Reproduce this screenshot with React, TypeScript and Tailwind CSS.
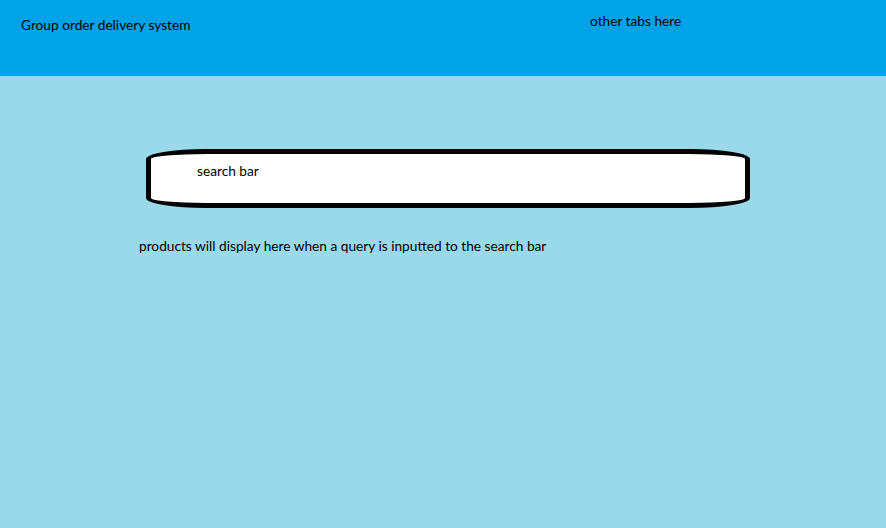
export default function App() {
  return (
    <div className="min-h-screen h-[528px] flex flex-col bg-[#99d9ea] text-black font-['Lato',sans-serif] text-[13.7px] leading-none">
      <header className="h-[76px] bg-[#00a2e8] flex items-start">
        <div className="pl-[21px] pt-[18px] w-[590px]">Group order delivery system</div>
        <div className="pt-[14px]">other tabs here</div>
      </header>

      <main className="flex flex-col">
        <div className="ml-[146px] mt-[73px] w-[604px] h-[59px] bg-white border-[5px] border-black rounded-[60px/10px] flex items-start">
          <span className="ml-[46px] mt-[10px]">search bar</span>
        </div>
        <p className="ml-[139px] mt-[31px]">products will display here when a query is inputted to the search bar</p>
      </main>
    </div>
  )
}
